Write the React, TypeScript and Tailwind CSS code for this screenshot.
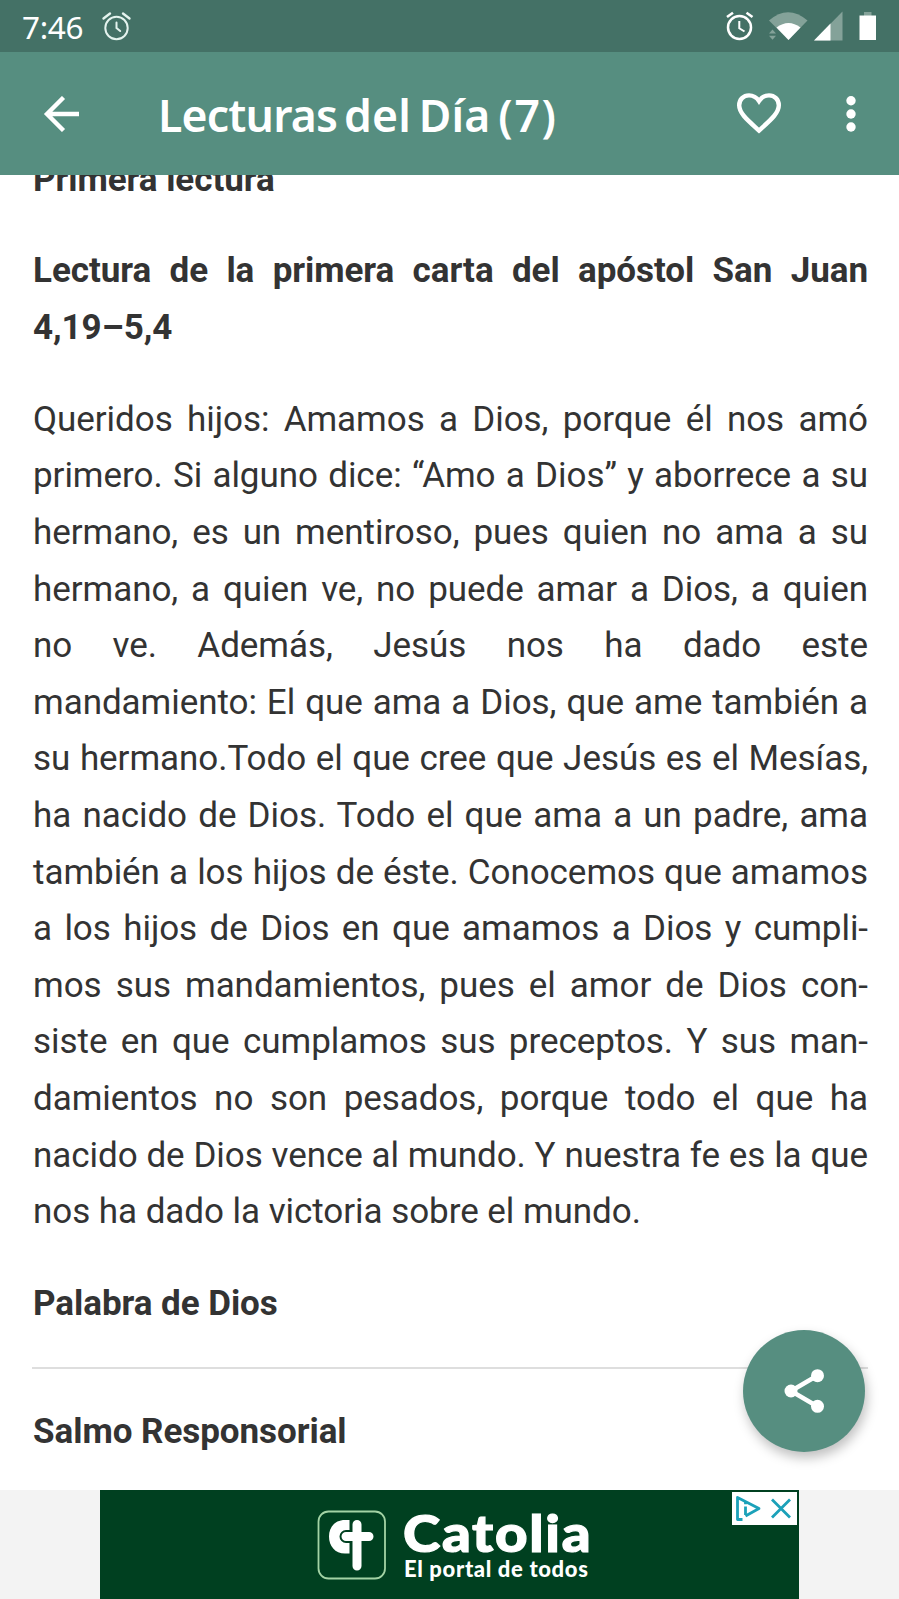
const introLines = ["Lectura de la primera carta del apóstol San Juan", "4,19–5,4"];

const bodyLines = [
  "Queridos hijos: Amamos a Dios, porque él nos amó",
  "primero. Si alguno dice: “Amo a Dios” y aborrece a su",
  "hermano, es un mentiroso, pues quien no ama a su",
  "hermano, a quien ve, no puede amar a Dios, a quien",
  "no ve. Además, Jesús nos ha dado este",
  "mandamiento: El que ama a Dios, que ame también a",
  "su hermano.Todo el que cree que Jesús es el Mesías,",
  "ha nacido de Dios. Todo el que ama a un padre, ama",
  "también a los hijos de éste. Conocemos que amamos",
  "a los hijos de Dios en que amamos a Dios y cumpli-",
  "mos sus mandamientos, pues el amor de Dios con-",
  "siste en que cumplamos sus preceptos. Y sus man-",
  "damientos no son pesados, porque todo el que ha",
  "nacido de Dios vence al mundo. Y nuestra fe es la que",
  "nos ha dado la victoria sobre el mundo.",
];

function Lines({ lines }: { lines: string[] }) {
  return (
    <>
      {lines.map((line, i) => (
        <span
          key={line}
          className={
            i < lines.length - 1
              ? "block h-[56.62px] whitespace-nowrap text-justify [text-align-last:justify]"
              : "block h-[56.62px] whitespace-nowrap"
          }
        >
          {line}
        </span>
      ))}
    </>
  );
}

function StatusBar() {
  return (
    <div className="flex h-[52px] shrink-0 items-start bg-[#447166] text-white">
      <span className="ml-[22px] mt-[5px] w-[62px] whitespace-nowrap font-['Noto_Sans',sans-serif] text-[31.5px] leading-[44px] tracking-[-0.3px]">
        7:46
      </span>
      <svg className="ml-[17px] mt-[10px] h-8 w-8" viewBox="0 0 32 32" fill="none" stroke="#e4f3ee" strokeLinecap="round">
        <circle cx="15.5" cy="18" r="11.2" strokeWidth="2" />
        <path d="M15.5 12.5V18l3.7 3" strokeWidth="2" />
        <path d="M2.5 8.5L9 3.5M28.5 8.5L22 3.5" strokeWidth="2.4" />
      </svg>
      <svg className="ml-auto mt-[10px] h-8 w-[160px]" viewBox="0 0 160 32" fill="none">
        <circle cx="13.5" cy="17.5" r="11.5" stroke="#fff" strokeWidth="2.5" />
        <path d="M13.3 11v7.3l5.2 3.2" stroke="#fff" strokeWidth="2" />
        <path d="M1 7L7 2.7M26.5 7L20.5 2.7" stroke="#fff" strokeWidth="2.6" />
        <path d="M43 10.5Q62-6 81.5 10.5L62.500 30Z" fill="#84a299" />
        <path d="M50.500 17.500Q62.500 8.500 74.500 17.500L62.500 30Z" fill="#fff" />
        <path d="M43 23.500l3.500-4 3.500 4zM43 25.800l3.500 4 3.500-4z" fill="#84a299" />
        <path d="M88 30.500L116.500 1.500V30.500Z" fill="#84a299" />
        <path d="M88 30.500L104.500 13.500V30.500Z" fill="#fff" />
        <path d="M138 2h7.500v4H138z" fill="#84a299" />
        <path d="M133.500 5.500H150V30H133.500z" fill="#fff" />
      </svg>
      <div className="w-[13px]" />
    </div>
  );
}

function AppBar() {
  return (
    <header className="flex h-[123px] shrink-0 items-center bg-[#568e80] text-white">
      <svg className="ml-[43px] h-9 w-[38px]" viewBox="0 0 38 36" fill="none" stroke="#fff" strokeWidth="4.400">
        <path d="M20.500 1.500L4 18l16.500 16.500M3.500 18H36" />
      </svg>
      <h1 className="ml-[77px] mt-[2px] whitespace-nowrap font-['Noto_Sans',sans-serif] text-[44.5px] font-[650] leading-[60px] [word-spacing:-4px]">
        <span className="tracking-[-0.8px]">Lecturas </span>
        <span className="tracking-[0.2px]">del Día </span>
        <span className="tracking-[1.7px]">(7)</span>
      </h1>
      <svg className="ml-auto mr-[64px] h-[42px] w-[46px]" viewBox="0 0 46 42" fill="none" stroke="#fff" strokeWidth="4.400">
        <path d="M23 37.500C12 27.500 3.200 20.500 3.200 12.300C3.200 6.500 7.500 2.400 13 2.400C17 2.400 20.500 4.300 23 8C25.500 4.300 29 2.400 33 2.400C38.500 2.400 42.800 6.500 42.800 12.300C42.800 20.500 34 27.500 23 37.500Z" />
      </svg>
      <svg className="mr-[43px] h-9 w-[10px]" viewBox="0 0 10 36" fill="#fff">
        <circle cx="5" cy="4.700" r="4.700" />
        <circle cx="5" cy="18" r="4.700" />
        <circle cx="5" cy="31" r="4.700" />
      </svg>
    </header>
  );
}

function AdBanner() {
  return (
    <div className="flex h-[109px] shrink-0 justify-center bg-[#f3f3f3]">
      <div className="relative flex h-full w-[699px] items-start bg-[#004020] text-white">
        <svg className="ml-[217px] mt-[20px] h-[70px] w-[70px]" viewBox="0 0 70 70" fill="none">
          <rect x="1.500" y="1.500" width="66.500" height="67" rx="10" stroke="#a3d3a5" strokeWidth="1.800" />
          <path d="M32.500 10H28C18 10 12 17 12 26.500C12 36 18 43.500 28 43.500H32.500V31.500H29C25.500 31.500 23 29.500 23 26.500C23 23.500 25.500 21.500 29 21.500H32.500Z" fill="#fff" />
          <path d="M40 14.500V56M29 26.500H52" stroke="#004020" strokeWidth="13" strokeLinecap="round" />
          <path d="M40 14.500V56M29 26.500H52" stroke="#fff" strokeWidth="9" strokeLinecap="round" />
        </svg>
        <div className="ml-[16px] flex flex-col items-start whitespace-nowrap font-[Lato,sans-serif] font-black">
          <span className="mt-[16px] h-[50px] origin-left scale-x-[1.085] text-[52px] leading-[52px] tracking-[1.6px] [-webkit-text-stroke:1.2px_white]">
            Catolia
          </span>
          <span className="ml-[1px] h-[26px] text-[22px] leading-[26px] tracking-[0.65px]">El portal de todos</span>
        </div>
        <div className="absolute right-[2px] top-[2px] flex h-[33px] w-[65px] items-center bg-white">
          <svg className="h-[33px] w-[65px]" viewBox="0 0 65 33" fill="none" stroke="#1ba1b9" strokeWidth="2.800">
            <path d="M10.500 27.500H5.500V5.500L27 16.500L13.500 24" strokeLinejoin="round" />
            <path d="M13.500 14.500v8.500M13.500 10v2.200" />
            <path d="M40 7.500L58 25.500M58 7.500L40 25.500" />
          </svg>
        </div>
      </div>
    </div>
  );
}

export default function App() {
  return (
    <div className="relative flex h-[1599px] w-[899px] flex-col overflow-hidden bg-white">
      <StatusBar />
      <AppBar />
      <main className="min-h-0 flex-1 overflow-hidden pl-[33px] pr-[31px] font-[Roboto,sans-serif] text-[35px] leading-[56.620px] tracking-[-0.050px] text-[#333333]">
        <h2 className="-mt-[23.200px] h-[56.600px] font-bold">Primera lectura</h2>
        <h3 className="mt-[34.900px] font-bold">
          <Lines lines={introLines} />
        </h3>
        <p className="mt-[35.200px]">
          <Lines lines={bodyLines} />
        </p>
        <p className="mt-[35.200px] font-bold">Palabra de Dios</p>
        <hr className="-ml-px mt-[34.400px] border-t-2 border-[#dedede]" />
        <h2 className="mt-[34.500px] font-bold">Salmo Responsorial</h2>
      </main>
      <AdBanner />
      <button
        aria-label="Compartir"
        className="absolute left-[743px] top-[1330px] flex h-[122px] w-[122px] items-center justify-center rounded-full bg-[#568e80] shadow-[2px_6px_12px_rgba(0,0,0,0.25)]"
      >
        <svg className="h-[44px] w-[40px]" viewBox="0 0 40 44" fill="#fff">
          <path d="M33.500 6.500L7 22L33.500 37.500" fill="none" stroke="#fff" strokeWidth="4.500" />
          <circle cx="33.500" cy="6.700" r="6.500" />
          <circle cx="7" cy="22" r="6.500" />
          <circle cx="33.500" cy="37.300" r="6.500" />
        </svg>
      </button>
    </div>
  );
}
